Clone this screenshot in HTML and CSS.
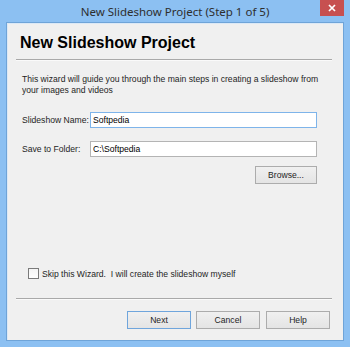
FILE: index.html
```html
<!DOCTYPE html>
<html lang="en">
<head>
    <meta charset="UTF-8">
    <title>New Slideshow Project (Step 1 of 5)</title>
    <link rel="stylesheet" href="styles.css">
</head>
<body>
    <div class="window">
        <!-- Title bar -->
        <div class="titlebar">
            <span></span>
            <span class="title">New Slideshow Project (Step 1 of 5)</span>
            <button class="close" title="Close">
                <svg width="8" height="8" viewBox="0 0 8 8">
                    <path d="M1 1 L7 7 M7 1 L1 7" stroke="#fff" stroke-width="1.7"/>
                </svg>
            </button>
        </div>

        <!-- Wizard page -->
        <div class="client">
            <h1 class="heading">New Slideshow Project</h1>
            <div class="rule"></div>

            <p class="intro">This wizard will guide you through the main steps in creating a slideshow from your images and videos</p>

            <div class="form">
                <label for="name">Slideshow Name:</label>
                <input type="text" id="name" class="field focused" value="Softpedia">
                <label for="folder">Save to Folder:</label>
                <input type="text" id="folder" class="field" value="C:\Softpedia">
                <button class="btn browse">Browse...</button>
            </div>

            <div class="spacer"></div>

            <label class="skip"><input type="checkbox" class="check"> Skip this Wizard.&nbsp; I will create the slideshow myself</label>

            <div class="rule bottom-rule"></div>

            <div class="actions">
                <button class="btn default">Next</button>
                <button class="btn">Cancel</button>
                <button class="btn">Help</button>
            </div>
        </div>
    </div>
</body>
</html>
```

FILE: styles.css
```css
body {
    margin: 0;
    font-family: "Liberation Sans", Arial, sans-serif;
}
.window {
    width: 350px;
    height: 347px;
    box-sizing: border-box;
    background-color: #8cc0f2;
    display: flex;
    flex-direction: column;
}
.titlebar {
    height: 22px;
    padding: 0 6px;
    display: grid;
    grid-template-columns: 1fr auto 1fr;
    align-items: start;
}
.title {
    font-family: "Noto Sans", "Open Sans", sans-serif;
    font-size: 11.5px;
    line-height: 24px;
    color: #2e2e2e;
    white-space: nowrap;
}
.close {
    justify-self: end;
    width: 24px;
    height: 16px;
    padding: 0;
    border: none;
    background-color: #c75050;
    display: flex;
    align-items: center;
    justify-content: center;
}
.client {
    flex: 1;
    margin: 0 6px 6px;
    border: 1px solid #6fa4d8;
    box-shadow: inset 1px 1px 0 #dce9f6;
    background-color: #f0f0f0;
    display: flex;
    flex-direction: column;
    font-size: 8.6px;
    color: #1e1e1e;
}
.heading {
    margin: 10px 0 0 13px;
    font-size: 16px;
    line-height: 20px;
    font-weight: bold;
    color: #000;
}
.rule {
    margin: 6px 11px 0 9px;
    height: 1px;
    background-color: #a9a9a9;
    border-bottom: 1px solid #fafafa;
}
.intro {
    margin: 13px 18px 0 15px;
    line-height: 10.5px;
}
.form {
    margin: 17px 0 0 15px;
    display: grid;
    grid-template-columns: 68px 227px;
    row-gap: 13px;
    align-items: center;
}
.field {
    height: 16px;
    box-sizing: border-box;
    margin: 0;
    padding: 0 2px;
    border: 1px solid #b4b4b4;
    background-color: #fff;
    font-family: inherit;
    font-size: 8.6px;
    color: #000;
    outline: none;
}
.field.focused {
    border-color: #7eb4ea;
}
.btn {
    height: 18px;
    width: 64px;
    padding: 0;
    box-sizing: border-box;
    border: 1px solid #acacac;
    background: linear-gradient(#f0f0f0, #e4e4e4);
    font-family: inherit;
    font-size: 8.6px;
    color: #1e1e1e;
}
.btn.default {
    border-color: #6fa5dc;
}
.browse {
    grid-column: 2;
    justify-self: end;
    width: 62px;
    margin-top: -4px;
}
.spacer {
    flex: 1;
}
.skip {
    margin-left: 21px;
    display: flex;
    align-items: center;
    gap: 3px;
    height: 11px;
}
.check {
    appearance: none;
    margin: 0;
    width: 11px;
    height: 11px;
    box-sizing: border-box;
    border: 1px solid #7a7a7a;
    background: linear-gradient(#f4f4f4, #fefefe);
}
.bottom-rule {
    margin-top: 19px;
}
.actions {
    margin: 11px 13px 11px 0;
    display: flex;
    justify-content: flex-end;
    gap: 5px;
}
.actions .btn:last-child {
    margin-left: 1px;
}
```
